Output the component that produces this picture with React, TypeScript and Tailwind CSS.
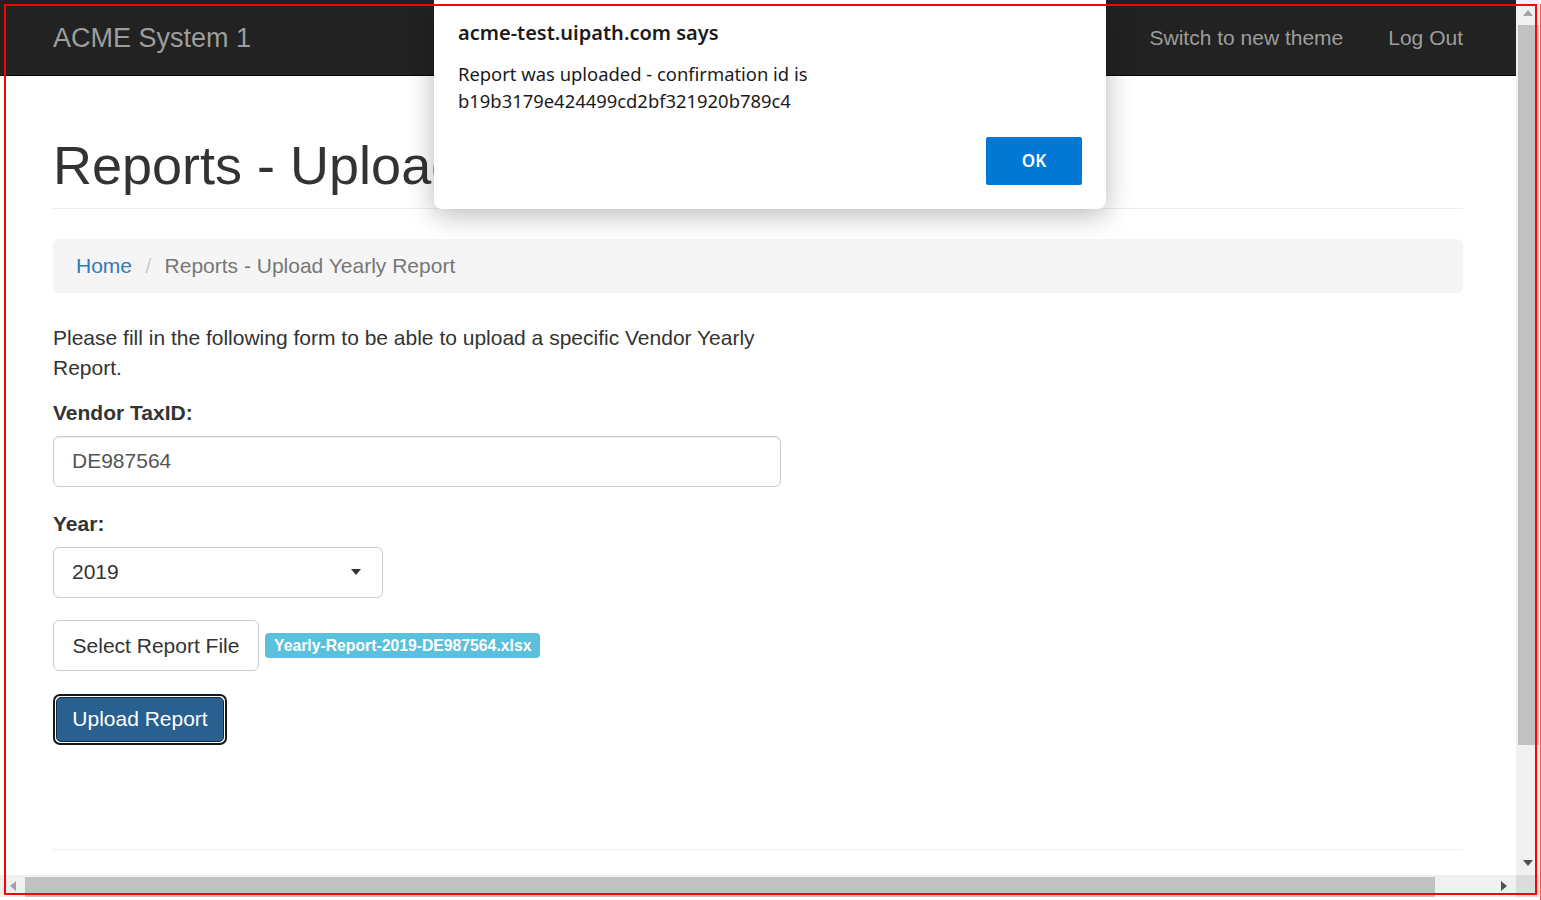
import React from "react";

function Tri({ dir, color }: { dir: "up" | "down" | "left" | "right"; color: string }) {
  const pts =
    dir === "up"
      ? "0,6 5,0 10,6"
      : dir === "down"
      ? "0,0 10,0 5,6"
      : dir === "left"
      ? "6,0 6,10 0,5"
      : "0,0 0,10 6,5";
  const w = dir === "up" || dir === "down" ? 10 : 6;
  const h = dir === "up" || dir === "down" ? 6 : 10;
  return (
    <svg width={w} height={h} viewBox={`0 0 ${w} ${h}`}>
      <polygon points={pts} fill={color} />
    </svg>
  );
}

export default function App() {
  return (
    <div className="relative h-[900px] w-[1541px] overflow-hidden bg-white font-['Liberation_Sans',Arial,sans-serif] text-[#333]">
      <div className="flex h-[897px]">
        {/* browser viewport */}
        <div className="flex w-[1516px] flex-col">
          <div className="h-[875px] overflow-hidden">
            <nav className="flex h-[76px] items-center justify-between border-b border-[#080808] bg-[#222] px-[53px]">
              <span className="text-[27px] leading-[30px] text-[#9d9d9d]">ACME System 1</span>
              <div className="flex gap-[45px] text-[21px] leading-[30px] text-[#9d9d9d]">
                <span>Switch to new theme</span>
                <span>Log Out</span>
              </div>
            </nav>
            <main className="px-[53px]">
              <div className="mt-[59px] border-b border-[#eee] pb-[13px]">
                <h1 className="text-[54px] font-medium leading-[60px] text-[#333]">
                  Reports - Upload Yearly Report
                </h1>
              </div>
              <div className="mt-[30px] h-[54px] rounded-[6px] bg-[#f5f5f5] px-[23px] py-[12px] text-[21px] leading-[30px]">
                <span className="text-[#337ab7]">Home</span>{" "}
                <span className="px-[7.5px] text-[#ccc]">/{"\u00a0"}</span>
                <span className="text-[#777]">Reports - Upload Yearly Report</span>
              </div>
              <div className="mt-[30px] w-[728px] text-[21px] leading-[30px]">
                <p className="mb-[15px]">
                  Please fill in the following form to be able to upload a specific Vendor Yearly Report.
                </p>
                <label className="mb-[7.5px] block font-bold">Vendor TaxID:</label>
                <div className="flex h-[51px] items-center rounded-[6px] border-[1.5px] border-[#ccc] px-[18px] text-[#555] shadow-[inset_0_1px_1px_rgba(0,0,0,0.075)]">
                  DE987564
                </div>
                <label className="mb-[7.5px] mt-[22.5px] block font-bold">Year:</label>
                <div className="flex h-[51px] w-[330px] items-center justify-between rounded-[6px] border-[1.5px] border-[#ccc] pl-[18px] pr-[21px] text-[#333]">
                  <span>2019</span>
                  <Tri dir="down" color="#333" />
                </div>
                <div className="mt-[22.5px] flex items-center gap-[6px]">
                  <div className="flex h-[51px] w-[206px] items-center justify-center rounded-[6px] border-[1.5px] border-[#ccc] bg-white text-[#333]">
                    Select Report File
                  </div>
                  <span className="flex h-[25px] items-center rounded-[4px] bg-[#5bc0de] px-[9px] text-[15.75px] font-bold leading-none text-white">
                    Yearly-Report-2019-DE987564.xlsx
                  </span>
                </div>
                <div className="mt-[23px] inline-flex rounded-[7px] border-2 border-[#101820] bg-white p-px">
                  <div className="flex h-[45px] w-[168px] items-center justify-center rounded-[5px] border border-[#122b40] bg-[#286090] pb-px text-white">
                    Upload Report
                  </div>
                </div>
              </div>
              <div className="mt-[104px] border-t border-[#eee]" />
            </main>
          </div>
          {/* horizontal scrollbar */}
          <div className="flex h-[22px] items-end bg-[#f0f0f0]">
            <div className="flex h-[22px] w-[25px] items-center justify-center">
              <Tri dir="left" color="#a3a3a3" />
            </div>
            <div className="h-[20px] w-[1410px] bg-[#c1c1c1]" />
            <div className="flex-1" />
            <div className="flex h-[22px] w-[25px] items-center justify-center">
              <Tri dir="right" color="#505050" />
            </div>
          </div>
        </div>
        {/* vertical scrollbar */}
        <div className="flex w-[23px] flex-col">
          <div className="flex h-[875px] flex-col bg-[#f0f0f0]">
            <div className="flex h-[25px] items-center justify-center">
              <Tri dir="up" color="#a3a3a3" />
            </div>
            <div className="ml-[2px] h-[720px] w-[21px] bg-[#c1c1c1]" />
            <div className="flex-1" />
            <div className="flex h-[25px] items-center justify-center">
              <Tri dir="down" color="#505050" />
            </div>
          </div>
          <div className="h-[22px] bg-[#dcdcdc]" />
        </div>
      </div>

      {/* alert dialog */}
      <div className="absolute left-[434px] top-0 h-[209px] w-[672px] rounded-b-[8px] bg-white px-[24px] pt-[20px] font-['Noto_Sans','Open_Sans',sans-serif] text-[#1b1b1b] shadow-[0_6px_28px_rgba(0,0,0,0.28)]">
        <div className="text-[20px] font-semibold leading-[26px]">acme-test.uipath.com says</div>
        <div className="mt-[14px] text-[18.4px] leading-[27px]">
          <div>Report was uploaded - confirmation id is</div>
          <div>b19b3179e424499cd2bf321920b789c4</div>
        </div>
        <div className="mt-[23px] flex justify-end">
          <div className="flex h-[48px] w-[96px] items-center justify-center rounded-[2px] bg-[#0078d4] text-[17px] font-semibold text-white">
            OK
          </div>
        </div>
      </div>

      {/* red highlight */}
      <div className="pointer-events-none absolute left-[4px] top-[4px] h-[891px] w-[1533px] border-2 border-[#ff0000]" />
      <div className="pointer-events-none absolute bottom-0 left-[1540px] top-[4px] w-px bg-[#ff4d4d]" />
    </div>
  );
}
